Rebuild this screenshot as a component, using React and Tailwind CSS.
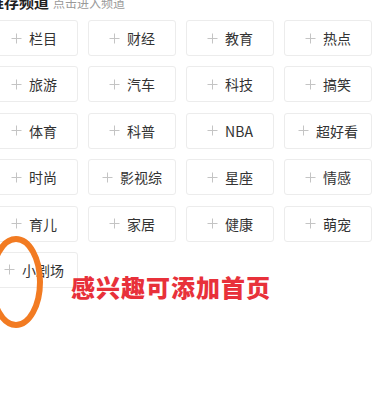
import React from 'react';

const channels = [
  '栏目', '财经', '教育', '热点',
  '旅游', '汽车', '科技', '搞笑',
  '体育', '科普', 'NBA', '超好看',
  '时尚', '影视综', '星座', '情感',
  '育儿', '家居', '健康', '萌宠',
  '小剧场',
];

const Plus = () => (
  <svg width="11" height="11" viewBox="0 0 11 11" className="shrink-0">
    <path d="M5.5 0.5v10M0.5 5.5h10" stroke="#c4c4c4" strokeWidth="1" fill="none" />
  </svg>
);

const ChannelCell = ({ name }) => (
  <div className="h-[36px] bg-white border border-[#ececec] rounded-[3px] flex items-center justify-center gap-[7px] text-[14px] text-[#333] leading-none">
    <Plus />
    <span>{name}</span>
  </div>
);

export default function App() {
  return (
    <div
      className="relative w-[375px] h-[394px] overflow-hidden bg-white"
      style={{ fontFamily: '"Noto Sans CJK SC", "Noto Sans", sans-serif' }}
    >
      {/* header, cropped at top like the screenshot */}
      <div className="flex items-end gap-[4px] mt-[-6px] ml-[-11px] h-[15px]">
        <span className="text-[15px] leading-[15px] font-bold text-[#222]">推存频道</span>
        <span className="text-[12px] leading-[13px] text-[#999]">点击进入频道</span>
      </div>

      <div className="mt-[11px] ml-[-10px] grid grid-cols-[repeat(4,88px)] gap-x-[10px] gap-y-[10.4px]">
        {channels.map((c) => (
          <ChannelCell key={c} name={c} />
        ))}
      </div>

      {/* annotation overlay */}
      <svg className="absolute left-0 top-0 pointer-events-none" width="375" height="394">
        <ellipse cx="16" cy="282" rx="24" ry="43" fill="none" stroke="#f27b22" strokeWidth="6" />
      </svg>
      <div className="absolute left-[71px] top-[272px] text-[24px] leading-[30px] font-black text-[#e8313a] tracking-[1px] whitespace-nowrap">
        感兴趣可添加首页
      </div>
    </div>
  );
}
